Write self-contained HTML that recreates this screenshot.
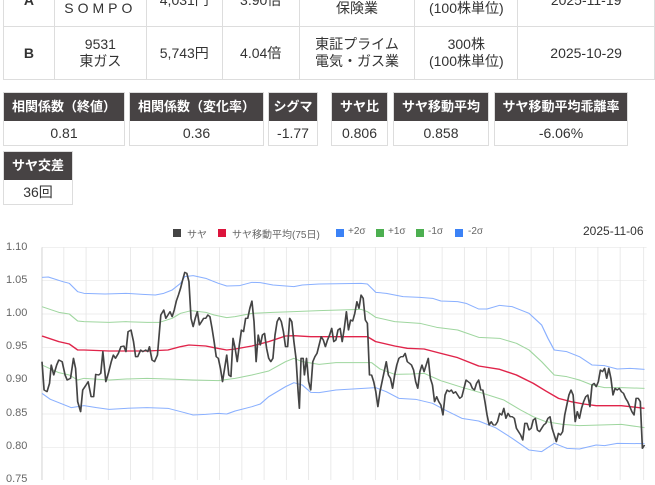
<!DOCTYPE html>
<html><head><meta charset="utf-8"><style>
*{margin:0;padding:0;box-sizing:border-box}
body{width:655px;height:480px;overflow:hidden;background:#fff;font-family:"Liberation Sans","Noto Sans CJK JP",sans-serif;color:#333;position:relative}
table{position:absolute;left:3px;top:-27px;border-collapse:collapse;font-size:14px}
td{border:1px solid #ddd;text-align:center;line-height:17px;height:53px}
td.h{font-weight:bold}
.m{position:absolute;border:1px solid #ddd;text-align:center}
.m .t{background:#474344;color:#fff;font-weight:bold;font-size:13px;height:28px;line-height:28px}
.m .v{font-size:14px;height:24px;line-height:24px}
.lab{position:absolute;left:6px;font-size:11px;color:#666}
</style></head><body>
<table>
<tr><td class="h" style="width:51px">A</td><td style="width:92px">8630<br><span style="letter-spacing:4px">SOMPO</span></td><td style="width:76px">4,031円</td><td style="width:77px">3.90倍</td><td style="width:116px">東証プライム<br>保険業</td><td style="width:103px">100株<br>(100株単位)</td><td style="width:137px">2025-11-19</td></tr>
<tr><td class="h">B</td><td>9531<br>東ガス</td><td>5,743円</td><td>4.04倍</td><td>東証プライム<br>電気・ガス業</td><td>300株<br>(100株単位)</td><td>2025-10-29</td></tr>
</table>
<div class="m" style="left:3px;top:92px;width:122px"><div class="t">相関係数（終値）</div><div class="v">0.81</div></div>
<div class="m" style="left:129px;top:92px;width:135px"><div class="t">相関係数（変化率）</div><div class="v">0.36</div></div>
<div class="m" style="left:268px;top:92px;width:50px"><div class="t">シグマ</div><div class="v">-1.77</div></div>
<div class="m" style="left:331px;top:92px;width:57px"><div class="t">サヤ比</div><div class="v">0.806</div></div>
<div class="m" style="left:393px;top:92px;width:96px"><div class="t">サヤ移動平均</div><div class="v">0.858</div></div>
<div class="m" style="left:494px;top:92px;width:134px"><div class="t">サヤ移動平均乖離率</div><div class="v">-6.06%</div></div>
<div class="m" style="left:3px;top:151px;width:70px"><div class="t">サヤ交差</div><div class="v">36回</div></div>

<div style="position:absolute;left:0;top:226px;width:655px;font-size:10px;color:#666">
<span style="position:absolute;left:173px;top:0;width:8px;height:8px;background:#444;top:3px"></span><span style="position:absolute;left:187px">サヤ</span>
<span style="position:absolute;left:218px;top:3px;width:8px;height:8px;background:#dc143c"></span><span style="position:absolute;left:232px">サヤ移動平均(75日)</span>
<span style="position:absolute;left:336px;top:3px;width:8px;height:8px;background:#3b82f6"></span><span style="position:absolute;left:348px">+2σ</span>
<span style="position:absolute;left:376px;top:3px;width:8px;height:8px;background:#4caf50"></span><span style="position:absolute;left:388px">+1σ</span>
<span style="position:absolute;left:416px;top:3px;width:8px;height:8px;background:#4caf50"></span><span style="position:absolute;left:428px">-1σ</span>
<span style="position:absolute;left:455px;top:3px;width:8px;height:8px;background:#3b82f6"></span><span style="position:absolute;left:468px">-2σ</span>
<span style="position:absolute;left:583px;top:-2px;font-size:12px;color:#333">2025-11-06</span>
</div>
<div class="lab" style="top:241px">1.10</div>
<div class="lab" style="top:274px">1.05</div>
<div class="lab" style="top:307px">1.00</div>
<div class="lab" style="top:340px">0.95</div>
<div class="lab" style="top:373px">0.90</div>
<div class="lab" style="top:407px">0.85</div>
<div class="lab" style="top:440px">0.80</div>
<div class="lab" style="top:473px">0.75</div>

<svg style="position:absolute;left:0;top:215px" width="655" height="265" viewBox="0 0 1560 795" preserveAspectRatio="none">
<g stroke="#e6e6e6" stroke-width="2" fill="none">
<path d="M100 97H1540M100 197H1540M100 297H1540M100 397H1540M100 497H1540M100 597H1540M100 697H1540"/>
<path d="M152 97V795M205 97V795M258 97V795M311 97V795M364 97V795M417 97V795M470 97V795M523 97V795M576 97V795M629 97V795M682 97V795M735 97V795M788 97V795M841 97V795M894 97V795M947 97V795M1000 97V795M1053 97V795M1106 97V795M1159 97V795M1212 97V795M1265 97V795M1318 97V795M1371 97V795M1424 97V795M1477 97V795M1533 97V795"/>
</g>
<path d="M100 97V795" stroke="#ccc" stroke-width="2"/>
<g fill="none" stroke-width="3" stroke-linejoin="round">
<polyline stroke="#8ab0ff" points="100,187 115,186 150,200 165,205 185,230 200,235 250,237 300,235 340,238 370,240 390,235 410,225 430,205 440,185 460,182 490,190 520,205 540,213 570,212 600,202 620,203 650,210 700,215 720,210 760,207 860,205 875,207 895,232 920,235 960,245 1000,247 1030,250 1050,258 1090,260 1110,265 1140,282 1160,282 1190,271 1220,275 1260,295 1290,330 1305,370 1320,405 1350,410 1380,425 1410,450 1440,452 1470,462 1500,460 1535,463"/>
<polyline stroke="#9fd69f" points="100,275 140,292 165,297 185,318 200,320 260,322 300,320 350,322 380,322 410,310 430,295 455,287 490,292 510,300 540,308 560,305 600,295 650,292 700,290 760,287 860,283 875,290 895,307 940,320 1000,325 1040,337 1090,345 1140,367 1190,370 1230,385 1260,405 1290,440 1320,480 1350,485 1380,495 1410,510 1440,518 1480,518 1535,520"/>
<polyline stroke="#e0244a" stroke-width="4" points="100,363 140,380 165,387 185,405 200,405 260,408 300,408 350,408 400,405 430,395 450,390 490,393 510,398 540,405 560,402 600,393 640,380 680,363 700,362 740,365 800,365 875,365 895,380 940,393 970,400 1010,402 1050,415 1090,428 1140,453 1190,463 1230,480 1270,505 1300,528 1330,550 1360,560 1390,567 1420,572 1480,572 1535,580"/>
<polyline stroke="#9fd69f" points="100,450 140,473 165,480 185,495 200,490 260,495 300,492 350,490 400,492 460,495 520,497 560,490 600,480 640,468 680,440 700,430 720,440 760,448 800,443 885,443 905,462 940,478 980,477 1010,475 1050,497 1100,517 1150,535 1200,555 1240,585 1270,605 1300,620 1340,628 1380,632 1480,628 1535,638"/>
<polyline stroke="#8ab0ff" points="100,535 120,553 150,568 170,578 200,572 230,578 260,583 300,580 350,578 400,580 440,593 460,600 490,598 520,595 540,597 560,588 600,575 620,567 640,545 660,530 680,515 700,503 720,510 740,532 760,533 800,525 840,522 895,518 920,530 950,550 990,553 1030,565 1060,585 1100,610 1140,618 1180,638 1220,670 1260,705 1290,710 1320,685 1350,700 1380,702 1420,690 1440,692 1470,685 1535,686"/>
<polyline stroke="#444" stroke-width="4" points="100,440 105,525 112,530 118,505 122,450 128,480 135,450 140,435 148,440 155,480 160,495 168,490 175,430 180,460 185,560 192,590 197,525 205,510 210,500 217,545 223,545 228,478 235,480 240,475 245,410 252,500 258,475 265,440 270,420 275,430 282,415 288,395 295,393 300,410 305,350 312,345 318,380 323,425 328,425 335,405 340,410 347,405 352,410 356,395 362,435 368,440 375,420 383,300 390,285 395,310 400,300 405,290 410,305 415,285 420,258 425,240 430,220 435,195 440,172 445,175 450,200 455,310 460,335 465,310 470,290 475,330 480,320 485,310 490,310 495,300 500,305 505,340 510,380 515,425 520,430 525,460 530,500 535,460 540,420 545,480 550,485 555,370 560,400 565,440 570,390 575,345 580,350 585,310 590,310 595,280 600,258 605,320 610,440 615,360 620,390 625,360 630,355 635,400 640,430 645,440 650,430 655,360 660,320 665,308 670,320 675,350 680,395 685,395 690,310 695,320 700,380 705,430 710,530 713,580 717,430 722,430 725,480 730,430 735,500 740,525 745,440 750,425 755,415 760,390 765,365 770,375 775,395 780,375 785,360 790,340 795,380 800,375 805,345 810,340 815,380 820,340 825,290 830,345 835,315 840,318 845,295 850,260 855,280 860,240 865,250 870,315 875,325 880,480 885,480 890,500 895,530 900,575 905,530 910,500 915,470 920,440 925,480 930,490 935,520 940,480 945,450 950,430 955,425 960,425 965,415 970,440 975,445 980,450 985,465 990,500 995,520 1000,470 1005,450 1010,470 1015,450 1020,430 1025,490 1030,510 1035,560 1040,545 1045,560 1050,570 1055,600 1060,540 1065,525 1070,530 1075,525 1080,535 1085,530 1090,540 1095,550 1100,545 1105,520 1110,495 1115,500 1120,505 1125,520 1130,525 1135,505 1140,495 1145,525 1150,525 1155,560 1160,600 1165,630 1170,620 1175,630 1180,630 1185,620 1190,595 1195,600 1200,580 1205,610 1210,595 1215,605 1220,605 1225,610 1230,640 1235,650 1240,660 1245,675 1250,625 1255,625 1260,645 1265,640 1270,615 1275,610 1280,645 1285,650 1290,640 1295,630 1300,625 1305,610 1310,605 1315,640 1320,660 1325,680 1330,655 1335,660 1340,650 1345,600 1350,570 1355,540 1360,525 1365,540 1370,620 1375,590 1380,610 1385,580 1390,560 1395,545 1400,540 1405,575 1410,510 1415,505 1420,515 1425,500 1430,465 1435,470 1440,460 1445,490 1450,460 1455,490 1460,540 1465,520 1470,525 1475,520 1480,530 1485,535 1490,550 1495,560 1500,575 1505,590 1510,600 1515,550 1520,550 1525,560 1530,700 1535,690"/>
</g>
</svg>
</body></html>
